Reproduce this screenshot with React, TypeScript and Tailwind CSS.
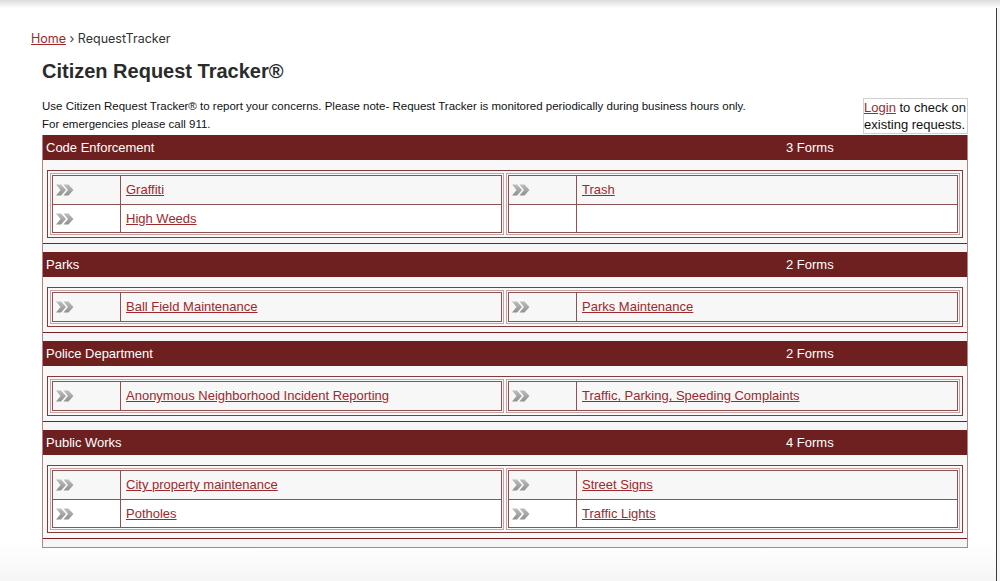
import React from "react";

type Section = { name: string; count: string; left: string[]; right: string[] };

const sections: Section[] = [
  { name: "Code Enforcement", count: "3 Forms", left: ["Graffiti", "High Weeds"], right: ["Trash", ""] },
  { name: "Parks", count: "2 Forms", left: ["Ball Field Maintenance"], right: ["Parks Maintenance"] },
  {
    name: "Police Department",
    count: "2 Forms",
    left: ["Anonymous Neighborhood Incident Reporting"],
    right: ["Traffic, Parking, Speeding Complaints"],
  },
  {
    name: "Public Works",
    count: "4 Forms",
    left: ["City property maintenance", "Potholes"],
    right: ["Street Signs", "Traffic Lights"],
  },
];

function Arrows() {
  return (
    <svg width="18" height="12" viewBox="0 0 18 12">
      <defs>
        <linearGradient id="ag" x1="0" y1="0" x2="0" y2="1">
          <stop offset="0" stopColor="#bdbdbd" />
          <stop offset="1" stopColor="#8e9191" />
        </linearGradient>
      </defs>
      <polygon points="0,0.5 5,0.5 10,6 5,11.5 0,11.5 4.5,6" fill="url(#ag)" />
      <polygon points="7.5,0.5 12.5,0.5 17.5,6 12.5,11.5 7.5,11.5 12,6" fill="url(#ag)" />
    </svg>
  );
}

function FormTable({ items }: { items: string[] }) {
  return (
    <div className="border border-[#8f5252] bg-white">
      {items.map((it, i) => (
        <div
          key={i}
          className={`flex h-[28px] ${i > 0 ? "border-t border-[#8f5252]" : ""} ${
            i % 2 === 0 ? "bg-[#f7f7f7]" : "bg-white"
          }`}
        >
          <div className="flex w-[68px] shrink-0 items-center border-r border-[#8f5252] pl-[3px]">
            {it ? <Arrows /> : null}
          </div>
          <div className="flex flex-1 items-center pl-[5px]">
            {it ? (
              <a href="#" className="text-[13px] text-[#a0282b] underline">
                {it}
              </a>
            ) : null}
          </div>
        </div>
      ))}
    </div>
  );
}

export default function App() {
  return (
    <div
      className="flex h-[581px] w-[1000px] flex-col overflow-hidden bg-white text-[#222]"
      style={{ fontFamily: '"Liberation Sans", Arial, sans-serif' }}
    >
      <div className="h-[8px] shrink-0 bg-gradient-to-b from-[#dcdcdc] to-white" />
      <div className="flex flex-1">
        <div className="flex flex-1 flex-col bg-gradient-to-b from-white from-[93%] to-[#f6f6f6]">
          <div className="pl-[31px] pt-[22px]">
            <div
              className="h-[18px] text-[12.5px] leading-[18px] text-[#333]"
              style={{ fontFamily: "Inter, sans-serif" }}
            >
              <a href="#" className="text-[#a0282b] underline">
                Home
              </a>
              <span> › RequestTracker</span>
            </div>
            <div className="ml-[11px] w-[926px]">
              <h1 className="mt-[11px] text-[20px] font-bold leading-[24px] text-[#2b2b2b]">Citizen Request Tracker®</h1>
              <div className="mt-[14px] flex items-start justify-between">
                <p className="text-[11.5px] leading-[18px] text-[#111]">
                  Use Citizen Request Tracker® to report your concerns. Please note- Request Tracker is monitored
                  periodically during business hours only.
                  <br />
                  For emergencies please call 911.
                </p>
                <div className="mt-[1px] whitespace-nowrap border border-[#cfcfcf] pr-[1px] text-[13px] leading-[17px] text-[#111]">
                  <a href="#" className="text-[#a0282b] underline">
                    Login
                  </a>{" "}
                  to check on
                  <br />
                  existing requests.
                </div>
              </div>
              <div className="mt-[1px] border-x border-b border-[#b48384] bg-[#f8f8f8]">
                {sections.map((s, idx) => (
                  <div key={s.name}>
                    {idx > 0 ? (
                      <div className="h-[9px] border-t border-[#7a1f21] bg-[#f6f6f6]" />
                    ) : null}
                    <div className="flex h-[25px] items-center bg-[#6e1f20] text-[13px] text-white">
                      <div className="flex-1 pl-[3px]">{s.name}</div>
                      <div className="w-[184px] pl-[3px]">{s.count}</div>
                    </div>
                    <div className="px-[4px] pb-[5px] pt-[10px]">
                      <div className="flex gap-[2px] border border-[#86393a] p-[2px]">
                        <div className="flex-1 border border-[#c9a3a3] p-[1px]">
                          <FormTable items={s.left} />
                        </div>
                        <div className="flex-1 border border-[#c9a3a3] p-[1px]">
                          <FormTable items={s.right} />
                        </div>
                      </div>
                    </div>
                  </div>
                ))}
                <div className="h-[9px] border-t border-[#7a1f21] bg-[#f6f6f6]" />
              </div>
            </div>
          </div>
        </div>
        <div className="w-[4px] shrink-0 border-l border-[#3a3a3a] bg-[#f7f7f7]" />
      </div>
    </div>
  );
}
